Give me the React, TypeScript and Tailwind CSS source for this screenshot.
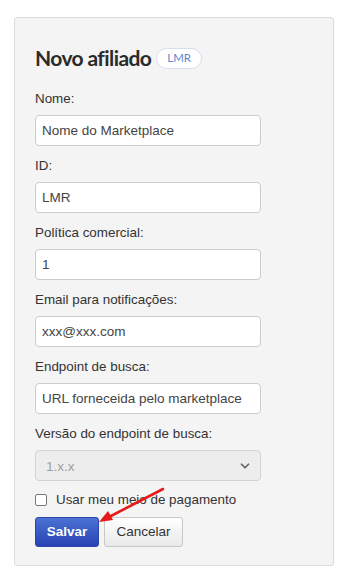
import { ChevronDown } from "lucide-react";

const FIELDS: { label: string; value: string }[] = [
  { label: "Nome:", value: "Nome do Marketplace" },
  { label: "ID:", value: "LMR" },
  { label: "Política comercial:", value: "1" },
  { label: "Email para notificações:", value: "xxx@xxx.com" },
  { label: "Endpoint de busca:", value: "URL forneceida pelo marketplace" },
];

function Field({ label, value }: { label: string; value: string }) {
  return (
    <div className="mb-[10px]">
      <label className="mb-[6px] block text-[13.4px] leading-[20px] text-[#333]">{label}</label>
      <input
        readOnly
        value={value}
        className="block h-[31px] w-[226px] rounded-[4px] border border-[#ccc] bg-white px-[6px] text-[13.5px] text-[#444] outline-none"
      />
    </div>
  );
}

export default function App() {
  return (
    <div className="min-h-screen bg-white pt-[17px] pl-[14px] font-['Liberation_Sans',Arial,sans-serif]">
      <div className="relative w-[320px] rounded-[3px] border border-[#dcdcdc] bg-[#f4f4f4] px-[20px] pt-[25px] pb-[18px]">
        {/* cabeçalho */}
        <div className="mb-[16px] flex items-center gap-[5px] font-['Lato',sans-serif]">
          <h2 className="text-[21px] leading-[30px] font-bold tracking-[-0.6px] text-[#2b2b2b]">Novo afiliado</h2>
          <span className="flex h-[21px] items-center rounded-full border border-[#d5deeb] bg-white px-[10px] text-[11.5px] text-[#5f85c9]">
            LMR
          </span>
        </div>

        {FIELDS.map((f) => (
          <Field key={f.label} {...f} />
        ))}

        <div>
          <label className="mb-[6px] block text-[13.4px] leading-[20px] text-[#333]">Versão do endpoint de busca:</label>
          <div className="relative h-[31px] w-[226px] rounded-[4px] border border-[#d3d3d3] bg-[#ededed]">
            <span className="absolute top-[6px] left-[10px] text-[13.5px] text-[#a0a0a0]">1.x.x</span>
            <ChevronDown className="absolute top-[8px] right-[8px] h-[14px] w-[14px] text-[#666]" strokeWidth={3} />
          </div>
        </div>

        <label className="mt-[9px] flex h-[20px] items-center gap-[9px] text-[13.4px] text-[#333]">
          <span className="h-[12px] w-[12px] rounded-[2px] border border-[#777] bg-white" />
          Usar meu meio de pagamento
        </label>

        <div className="mt-[7px] flex gap-[5px]">
          <button className="h-[30px] w-[64px] rounded-[3px] border border-[#2b46a8] bg-gradient-to-b from-[#4b72d4] to-[#2a42b3] text-[13.5px] font-bold text-white">
            Salvar
          </button>
          <button className="h-[30px] w-[79px] rounded-[3px] border border-[#c8c8c8] bg-gradient-to-b from-white to-[#e9e9e9] text-[13.5px] text-[#333]">
            Cancelar
          </button>
        </div>

        {/* seta vermelha de anotação */}
        <svg className="pointer-events-none absolute top-[468px] left-[80px]" width="70" height="40" viewBox="0 0 70 40">
          <line x1="68" y1="3" x2="14" y2="31" stroke="#e81919" strokeWidth="2.6" strokeLinecap="round" />
          <polygon points="4,36 13,25 18,34" fill="#e81919" />
        </svg>
      </div>
    </div>
  );
}
